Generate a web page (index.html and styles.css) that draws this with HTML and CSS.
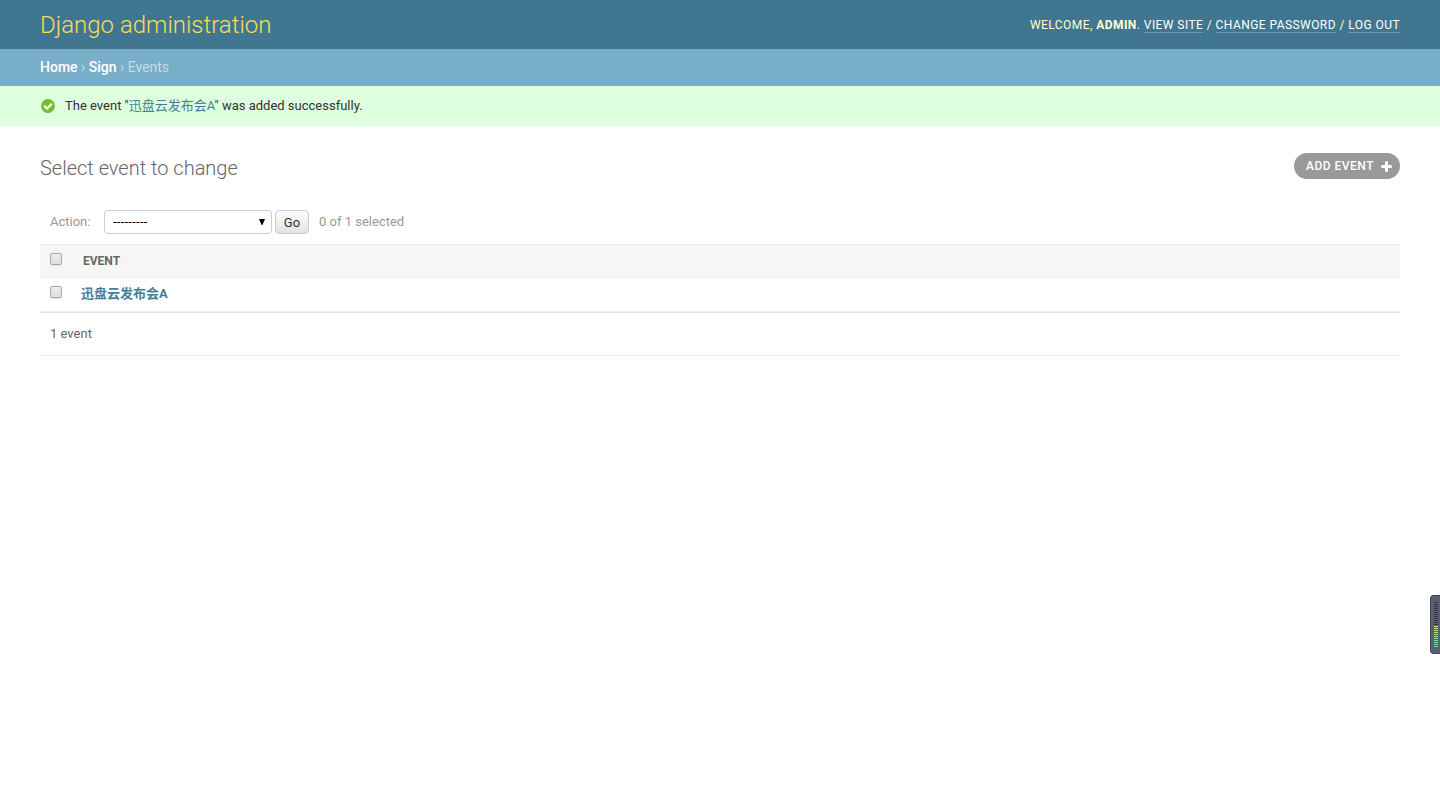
FILE: index.html
```html
<!DOCTYPE html>
<html lang="en-us">
<head>
  <meta charset="utf-8">
  <title>Select event to change | Django site admin</title>
  <link rel="stylesheet" href="styles.css">
</head>
<body class="change-list">
  <!-- Header -->
  <div class="header">
    <h1 class="site-name"><a href="#">Django administration</a></h1>
    <div class="user-tools">
      Welcome, <strong>admin</strong>.
      <a href="#">View site</a> /
      <a href="#">Change password</a> /
      <a href="#">Log out</a>
    </div>
  </div>
  <div class="breadcrumbs">
    <a href="#">Home</a> &rsaquo; <a href="#">Sign</a> &rsaquo; Events
  </div>
  <div class="message">
    <svg class="icon-yes" width="14" height="14" viewBox="0 0 14 14">
      <circle cx="7" cy="7" r="6.9" fill="#70bf2b"/>
      <path d="M3.2 6.7L6 9.5L10.8 4.7" fill="none" stroke="#fff" stroke-width="2.3"/>
    </svg>
    <span>The event "<a href="#">迅盘云发布会A</a>" was added successfully.</span>
  </div>

  <!-- Content -->
  <div class="content">
    <div class="title-row">
      <h1 class="title">Select event to change</h1>
      <a class="addlink" href="#">Add event
        <svg width="11" height="11" viewBox="0 0 11 11">
          <path d="M5.5 0.3V10.7M0.3 5.5H10.7" stroke="#fff" stroke-width="3"/>
        </svg>
      </a>
    </div>

    <form class="changelist-form">
      <div class="actions">
        <label for="action">Action:</label>
        <div class="select-box">
          <select id="action">
            <option>---------</option>
            <option>Delete selected events</option>
          </select>
          <svg class="arrow" width="6" height="6" viewBox="0 0 6 6"><path d="M0 0H6L3.4 6H2.6Z"/></svg>
        </div>
        <button class="button" type="button">Go</button>
        <span class="action-counter">0 of 1 selected</span>
      </div>

      <table class="result-list">
        <thead>
          <tr>
            <th class="check"><input type="checkbox"></th>
            <th class="column-event">Event</th>
          </tr>
        </thead>
        <tbody>
          <tr>
            <td class="check"><input type="checkbox"></td>
            <th class="field-event"><a href="#">迅盘云发布会A</a></th>
          </tr>
        </tbody>
      </table>

      <p class="paginator">1 event</p>
    </form>
  </div>

  <!-- level meter on the right edge -->
  <div class="meter">
    <div class="meter-off"></div>
    <div class="meter-on"></div>
  </div>
</body>
</html>
```

FILE: styles.css
```css
* {
    box-sizing: border-box;
}
body {
    margin: 0;
    height: 799px;
    overflow: hidden;
    background: #fff;
    color: #333;
    font-family: Roboto, "Noto Sans CJK SC", sans-serif;
    font-size: 13px;
}
a {
    color: #447e9b;
    text-decoration: none;
}

/* HEADER */
.header {
    display: flex;
    justify-content: space-between;
    align-items: center;
    height: 49px;
    padding: 0 40px;
    background: #417690;
    color: #ffc;
}
.site-name {
    margin: 0;
    font-size: 24px;
    font-weight: 300;
    line-height: 28px;
}
.site-name a {
    color: #f5dd5d;
}
.user-tools {
    font-size: 12px;
    line-height: 14px;
    letter-spacing: 0.44px;
    text-transform: uppercase;
}
.user-tools a {
    color: #fff;
    border-bottom: 1px solid rgba(255, 255, 255, 0.25);
}
.breadcrumbs {
    height: 37px;
    padding: 10px 40px;
    background: #79aec8;
    color: #c4dce8;
    font-size: 14px;
    line-height: 16px;
}
.breadcrumbs a {
    color: #fff;
    font-weight: 500;
}
.message {
    display: flex;
    align-items: center;
    height: 40px;
    padding: 0 40px 0 41px;
    background: #dfd;
    line-height: 20px;
}
.icon-yes {
    margin-right: 10px;
}

/* CONTENT */
.content {
    padding: 27px 40px 0;
}
.title-row {
    display: flex;
    justify-content: space-between;
    align-items: flex-start;
    height: 57px;
}
.title {
    margin: 3px 0 0;
    color: #666;
    font-size: 20px;
    font-weight: 300;
    line-height: 24px;
}
.addlink {
    display: flex;
    align-items: center;
    gap: 7px;
    height: 26px;
    padding: 0 8px 0 12px;
    border-radius: 15px;
    background: #999;
    color: #fff;
    font-size: 12px;
    font-weight: 500;
    letter-spacing: 0.5px;
    text-transform: uppercase;
}
.actions {
    display: flex;
    align-items: flex-start;
    height: 34px;
    padding: 0 10px;
    color: #999;
    line-height: 23px;
}
.actions label {
    width: 54px;
}
.select-box {
    position: relative;
    width: 168px;
    height: 24px;
}
.select-box select {
    display: block;
    width: 168px;
    height: 24px;
    margin: 0;
    padding: 0 8px 2px;
    appearance: none;
    border: 1px solid #ccc;
    border-radius: 4px;
    background: #fff;
    color: #000;
    font: 13px Roboto, sans-serif;
    letter-spacing: 0.25px;
}
.arrow {
    position: absolute;
    top: 9px;
    right: 7px;
}
.button {
    width: 34px;
    height: 24px;
    margin-left: 3px;
    padding: 1px 0 0;
    border: 1px solid #ccc;
    border-radius: 4px;
    background: linear-gradient(#fcfcfc, #e2e2e2);
    color: #333;
    font: 13px Roboto, sans-serif;
}
.action-counter {
    margin-left: 10px;
}

/* RESULTS */
.result-list {
    width: 100%;
    border-collapse: separate;
    border-spacing: 0;
}
.result-list th,
.result-list td {
    height: 34px;
    padding: 0;
    border-bottom: 1px solid #eee;
    text-align: left;
    vertical-align: middle;
}
.result-list thead th {
    border-top: 1px solid #eee;
    background: #f6f6f6;
    color: #666;
    font-size: 12px;
}
.result-list .check {
    width: 41px;
    padding: 0 0 4px 10px;
}
.result-list td.check {
    padding-bottom: 6px;
}
.result-list .column-event {
    padding-left: 2px;
    text-transform: uppercase;
}
.result-list .field-event {
    padding-bottom: 1px;
    line-height: 16px;
}
input[type="checkbox"] {
    display: block;
    width: 12px;
    height: 12px;
    margin: 0;
    appearance: none;
    border: 1px solid #aaa;
    border-radius: 2px;
    background: linear-gradient(#eee, #dcdcdc);
    box-shadow: 0 1px 1px rgba(0, 0, 0, 0.1);
}
.paginator {
    height: 44px;
    margin: 0;
    padding: 0 10px;
    border-top: 1px solid #ddd;
    border-bottom: 1px solid #eee;
    color: #666;
    line-height: 42px;
}

/* METER */
.meter {
    position: absolute;
    top: 595px;
    right: 0;
    width: 10px;
    height: 59px;
    padding: 6px 1px 0 3px;
    border: 1px solid #414552;
    border-right: 0;
    border-radius: 4px 0 0 4px;
    background: #5a6072;
}
.meter-off,
.meter-on {
    width: 4px;
    height: 24px;
    background: repeating-linear-gradient(#343844 0 1px, transparent 1px 2px);
}
.meter-on {
    height: 22px;
    background: repeating-linear-gradient(transparent 0 1px, #5a6072 1px 2px), linear-gradient(#d5e87b, #a0dc91 50%, #62d5c2);
}
```
